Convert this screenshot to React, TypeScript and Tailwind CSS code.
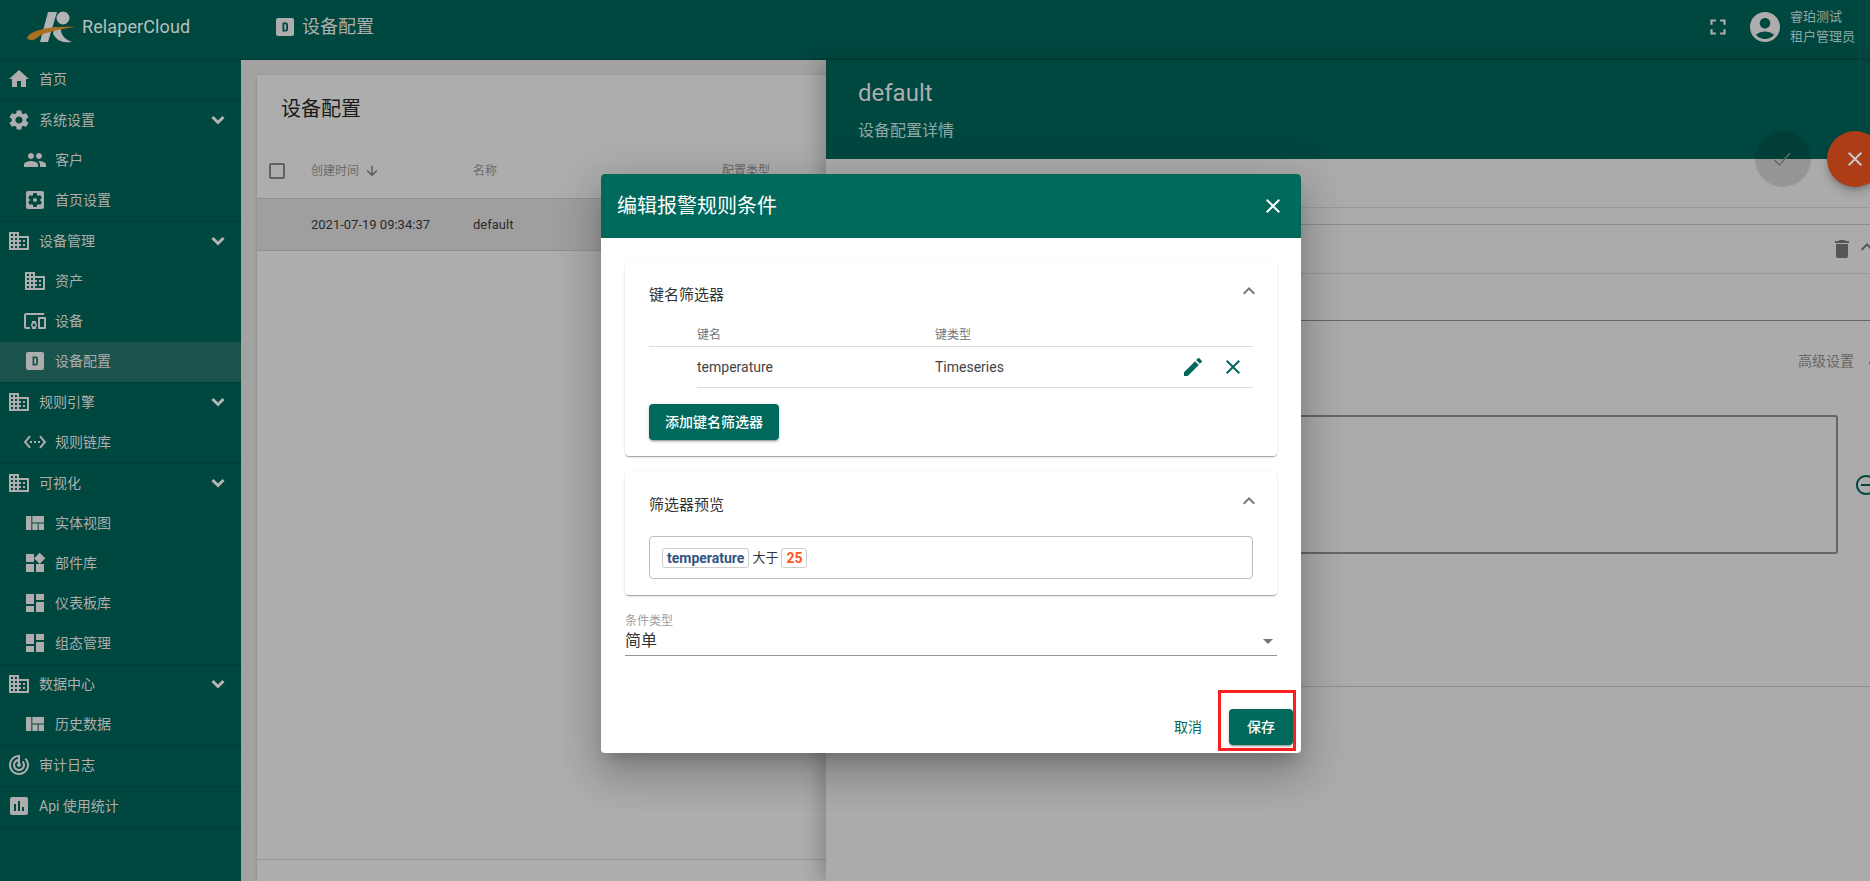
import React from "react";
import {
  MdHome, MdSettings, MdPeople, MdSettingsApplications, MdDomain, MdDevicesOther, MdSettingsEthernet,
  MdViewQuilt, MdWidgets, MdDashboard, MdTrackChanges, MdAssessment, MdFullscreen, MdAccountCircle,
  MdEdit, MdClose, MdExpandLess, MdArrowDownward, MdDelete, MdRemoveCircleOutline, MdArrowDropDown,
} from "react-icons/md";

const FONT = "font-['Roboto','Noto_Sans_CJK_SC',sans-serif]";

function DBox({ size = 18 }: { size?: number }) {
  return (
    <svg width={size} height={size} viewBox="0 0 18 18" fill="currentColor">
      <path fillRule="evenodd" d="M2 0h14a2 2 0 0 1 2 2v14a2 2 0 0 1-2 2H2a2 2 0 0 1-2-2V2a2 2 0 0 1 2-2zM6.5 4.5v9h3.5a2 2 0 0 0 2-2v-5a2 2 0 0 0-2-2zM8.3 6.2h1.9v5.6H8.3z" />
    </svg>
  );
}

function Chevron() {
  return (
    <svg width="14" height="10" viewBox="0 0 14 10" fill="none" stroke="currentColor" strokeWidth="3">
      <path d="M1.5 2 7 7.5 12.5 2" />
    </svg>
  );
}

function Logo() {
  return (
    <svg width="52" height="40" viewBox="0 0 52 40">
      <path d="M21 5h9L21 35H13z" fill="#b3b3b3" />
      <circle cx="36" cy="11" r="6.5" fill="#b3b3b3" />
      <path d="M27 20l7 1C33 27 38 33 45 35 38 36 33 35 29 31l-3-4z" fill="#b3b3b3" />
      <path d="M0 31C3 24 20 19 48 20 34 22 18 25 11 30 7 34 2 34 0 31z" fill="#a9701f" />
    </svg>
  );
}

type Item = { label: string; icon: React.ReactNode; active?: boolean };
type Group = { label: string; icon: React.ReactNode; expand?: boolean; items?: Item[] };

const groups: Group[] = [
  { label: "首页", icon: <MdHome size={24} /> },
  {
    label: "系统设置", icon: <MdSettings size={24} />, expand: true,
    items: [
      { label: "客户", icon: <MdPeople size={24} /> },
      { label: "首页设置", icon: <MdSettingsApplications size={24} /> },
    ],
  },
  {
    label: "设备管理", icon: <MdDomain size={24} />, expand: true,
    items: [
      { label: "资产", icon: <MdDomain size={24} /> },
      { label: "设备", icon: <MdDevicesOther size={24} /> },
      { label: "设备配置", icon: <DBox />, active: true },
    ],
  },
  {
    label: "规则引擎", icon: <MdDomain size={24} />, expand: true,
    items: [{ label: "规则链库", icon: <MdSettingsEthernet size={24} /> }],
  },
  {
    label: "可视化", icon: <MdDomain size={24} />, expand: true,
    items: [
      { label: "实体视图", icon: <MdViewQuilt size={24} /> },
      { label: "部件库", icon: <MdWidgets size={24} /> },
      { label: "仪表板库", icon: <MdDashboard size={24} /> },
      { label: "组态管理", icon: <MdDashboard size={24} /> },
    ],
  },
  {
    label: "数据中心", icon: <MdDomain size={24} />, expand: true,
    items: [{ label: "历史数据", icon: <MdViewQuilt size={24} /> }],
  },
  { label: "审计日志", icon: <MdTrackChanges size={24} /> },
  { label: "Api 使用统计", icon: <MdAssessment size={24} /> },
];

function Sidebar() {
  return (
    <aside className="flex w-[241px] shrink-0 flex-col bg-[#00473f] text-[14px] text-[#adadad]">
      <div className="flex h-[60px] shrink-0 items-center border-b border-[#003f37] pb-[6px] pl-[27px]">
        <Logo />
        <span className="ml-[3px] text-[18px] tracking-[0.1px] text-[#b5c0bd]">RelaperCloud</span>
      </div>
      {groups.map((g) => (
        <div key={g.label} className="border-b border-[#003f37]">
          <div className="flex h-10 items-center pb-[2px] pl-[7px] pr-[13px]">
            <span className="flex w-6 justify-center">{g.icon}</span>
            <span className="ml-2">{g.label}</span>
            {g.expand && (
              <span className="ml-auto flex w-5 justify-center text-[#b5b5b5]">
                <Chevron />
              </span>
            )}
          </div>
          {g.items?.map((it) => (
            <div key={it.label} className={`flex h-10 items-center pb-[2px] pl-[23px] ${it.active ? "bg-[#1b544c]" : ""}`}>
              <span className="flex w-6 justify-center">{it.icon}</span>
              <span className="ml-2">{it.label}</span>
            </div>
          ))}
        </div>
      ))}
    </aside>
  );
}

function TopBar() {
  return (
    <header className="flex h-[60px] shrink-0 items-center border-b border-[#003a33] bg-[#00473f] pb-[6px] pl-[35px] pr-[14px] text-[#adadad]">
      <DBox />
      <span className="ml-2 text-[18px]">设备配置</span>
      <MdFullscreen size={26} className="ml-auto" />
      <MdAccountCircle size={36} className="ml-[16px]" />
      <div className="ml-[7px] flex w-[66px] flex-col gap-[3px] text-[13px] leading-[17px] text-[#8fa8a3]">
        <span>睿珀测试</span>
        <span>租户管理员</span>
      </div>
    </header>
  );
}

function DevicePanel() {
  return (
    <section className="mx-[16px] mt-[15px] flex h-[806px] flex-col bg-[#adadad] shadow-[0_1px_3px_rgba(0,0,0,0.2)]">
      <h2 className="pl-6 pt-[20px] text-[20px] leading-7 text-[#1a1a1a]">设备配置</h2>
      <div className="mt-[25px] flex h-[50px] items-center pb-[4px] text-[12px] text-[#6a6a6a]">
        <span className="ml-3 h-4 w-4 rounded-[2px] border-2 border-[#616161]" />
        <span className="ml-[26px] flex items-center gap-[5px]">
          创建时间 <MdArrowDownward size={16} className="text-[#555]" />
        </span>
        <span className="ml-[93px]">名称</span>
        <span className="ml-[225px]">配置类型</span>
      </div>
      <div className="flex h-[53px] items-center border-y border-[#909090] bg-[#9f9f9f] text-[13px] text-[#2a2a2a]">
        <span className="ml-[54px] w-[162px]">2021-07-19 09:34:37</span>
        <span>default</span>
      </div>
      <div className="mb-[21px] mt-auto border-t border-[#959595]" />
    </section>
  );
}

function Drawer() {
  return (
    <section className="absolute bottom-0 left-[826px] right-0 top-[60px] overflow-hidden bg-[#ababab] shadow-[-8px_0_16px_rgba(0,0,0,0.18)]">
      <div className="flex h-[99px] flex-col bg-[#00473f] pl-[32px] pt-[19px]">
        <span className="text-[24px] leading-7 text-[#adadad]">default</span>
        <span className="mt-[14px] text-[16px] leading-5 text-[#8fa8a3]">设备配置详情</span>
      </div>
      <div className="mt-[48px] border-t border-[#999]" />
      <div className="mt-4 border-t border-[#8c8c8c]">
        <div className="flex h-[48px] items-center justify-end pr-[11px] text-[#555]">
          <MdDelete size={24} />
          <MdExpandLess size={24} className="-mr-[20px] mb-1 ml-[1px]" />
        </div>
      </div>
      <div className="border-t border-[#999]" />
      <div className="mt-[46px] border-t border-[#666]" />
      <div className="mt-[30px] flex items-center justify-end text-[14px] leading-5 text-[#666]">
        <span>高级设置</span>
        <span className="ml-[15px] mt-[3px] h-[2px] w-[1px] bg-[#666]" />
      </div>
      <div className="mt-[44px] flex items-center">
        <div className="ml-[32px] h-[139px] w-[980px] shrink-0 rounded-[3px] border-2 border-[#666]" />
        <MdRemoveCircleOutline size={24} className="ml-[16px] shrink-0 text-[#00473f]" />
      </div>
      <div className="mt-[132px] border-t border-[#8f8f8f]" />
    </section>
  );
}

function Fab({ className, children }: { className: string; children: React.ReactNode }) {
  return <div className={`absolute top-[131px] flex h-14 w-14 items-center justify-center rounded-full ${className}`}>{children}</div>;
}

function KeyCard({ title, children, h }: { title: string; children: React.ReactNode; h: string }) {
  return (
    <div className={`rounded-[4px] bg-white px-6 shadow-[0_2px_1px_-1px_rgba(0,0,0,0.2),0_1px_1px_0_rgba(0,0,0,0.14),0_1px_3px_0_rgba(0,0,0,0.12)] ${h}`}>
      <div className="flex h-[64px] items-center justify-between pt-[3px] text-[15px] text-[#333]">
        <span>{title}</span>
        <MdExpandLess size={24} className="-mr-[8px] mb-[9px] text-[#757575]" />
      </div>
      {children}
    </div>
  );
}

function Dialog() {
  return (
    <div className="absolute left-[601px] top-[174px] flex h-[579px] w-[700px] flex-col overflow-hidden rounded-[4px] bg-white shadow-[0_11px_15px_-7px_rgba(0,0,0,0.2),0_24px_38px_3px_rgba(0,0,0,0.14),0_9px_46px_8px_rgba(0,0,0,0.12)]">
      <div className="flex h-16 shrink-0 items-center justify-between bg-[#00695c] pl-4 pr-4 text-white">
        <span className="text-[20px]">编辑报警规则条件</span>
        <MdClose size={24} />
      </div>
      <div className="flex flex-col gap-4 px-6 pt-6">
        <KeyCard title="键名筛选器" h="h-[194px]">
          <div className="-mt-[3px] flex h-[24px] items-center border-b border-[#ddd] pl-[48px] text-[12px] text-[#757575]">
            <span className="w-[238px]">键名</span>
            <span>键类型</span>
          </div>
          <div className="ml-[48px] flex h-[41px] items-center border-b border-[#ddd] text-[14px] text-[#444]">
            <span className="w-[238px]">temperature</span>
            <span>Timeseries</span>
            <MdEdit size={24} className="ml-auto text-[#00695c]" />
            <MdClose size={24} className="ml-[16px] mr-[8px] text-[#00695c]" />
          </div>
          <button className="mt-[16px] h-[36px] w-[130px] rounded-[4px] bg-[#00695c] text-[14px] font-medium text-white shadow-[0_3px_1px_-2px_rgba(0,0,0,0.2),0_2px_2px_0_rgba(0,0,0,0.14),0_1px_5px_0_rgba(0,0,0,0.12)]">
            添加键名筛选器
          </button>
        </KeyCard>
        <KeyCard title="筛选器预览" h="h-[123px]">
          <div className="flex h-[43px] items-center gap-[3px] rounded-[4px] border border-[#bdbdbd] pl-[12px] text-[13px] text-[#333]">
            <span className="rounded-[3px] border border-[#ccc] px-[4px] text-[14px] font-bold leading-[18px] text-[#305680]">temperature</span>
            <span>大于</span>
            <span className="rounded-[3px] border border-[#ccc] px-[4px] text-[14px] font-bold leading-[18px] text-[#ff5722]">25</span>
          </div>
        </KeyCard>
      </div>
      <div className="mx-6 mt-[19px] border-b border-[#949494] pb-[3px]">
        <div className="text-[12px] leading-[14px] text-[#9e9e9e]">条件类型</div>
        <div className="flex h-[24px] items-center justify-between pt-[2px] text-[16px] text-[#333]">
          <span>简单</span>
          <MdArrowDropDown size={24} className="-mr-[3px] text-[#757575]" />
        </div>
      </div>
      <div className="mb-[8px] mt-auto flex items-center justify-end pr-2">
        <span className="mr-[27px] text-[14px] text-[#00695c]">取消</span>
        <button className="h-9 w-16 rounded-[4px] bg-[#00695c] text-[14px] font-medium text-white shadow-[0_3px_1px_-2px_rgba(0,0,0,0.2),0_2px_2px_0_rgba(0,0,0,0.14),0_1px_5px_0_rgba(0,0,0,0.12)]">
          保存
        </button>
      </div>
    </div>
  );
}

export default function App() {
  return (
    <div className={`relative flex h-[881px] w-[1870px] overflow-hidden bg-[#a2a2a2] ${FONT}`}>
      <Sidebar />
      <div className="flex min-w-0 flex-1 flex-col">
        <TopBar />
        <DevicePanel />
      </div>
      <Drawer />
      <Fab className="left-[1755px] bg-[rgba(0,0,0,0.12)] text-[#666]">
        <svg width="24" height="24" viewBox="0 0 24 24" fill="none" stroke="currentColor" strokeWidth="1.4" className="-ml-[2px]">
          <path d="M4.5 13l5 5L20 6" />
        </svg>
      </Fab>
      <Fab className="left-[1827px] bg-[#ad3d17] text-[#c8c8c8] shadow-[0_3px_5px_-1px_rgba(0,0,0,0.2),0_6px_10px_0_rgba(0,0,0,0.14)]">
        <MdClose size={24} />
      </Fab>
      <Dialog />
      <div className="absolute left-[1218px] top-[690px] h-[61px] w-[78px] border-[3px] border-[#fb1f1f]" />
    </div>
  );
}
